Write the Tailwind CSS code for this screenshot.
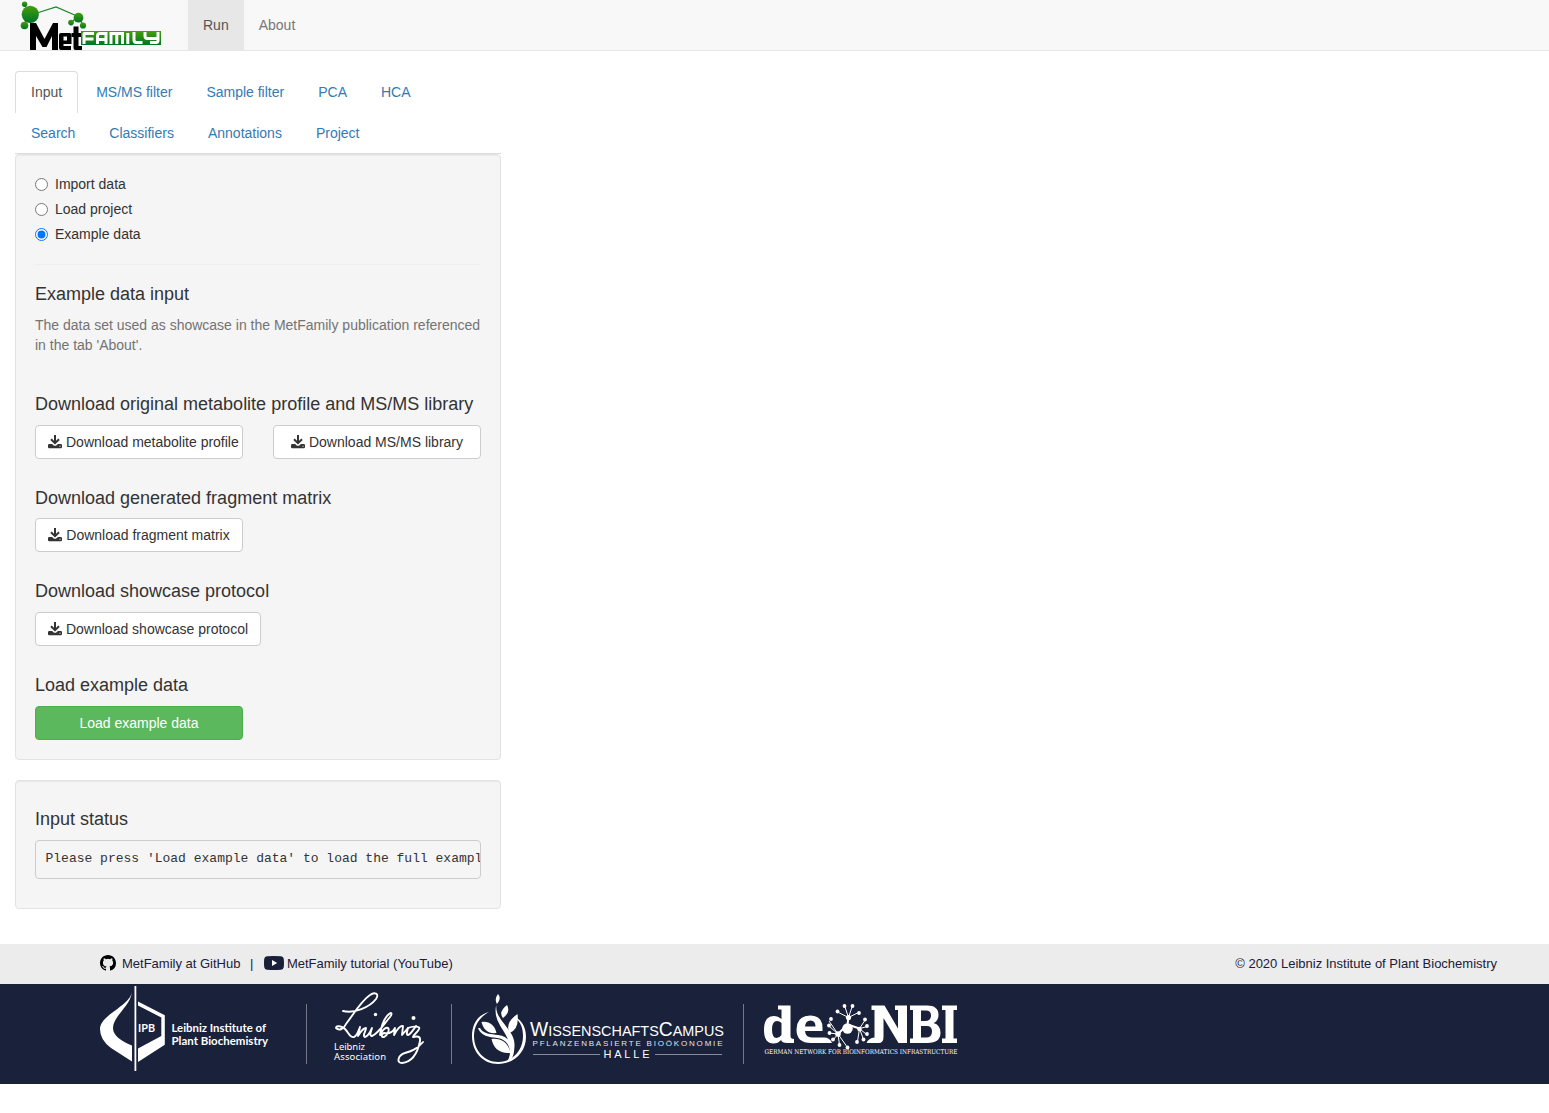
<!DOCTYPE html>
<html lang="en">
<head>
<meta charset="utf-8">
<title>MetFamily</title>
<script src="https://cdn.jsdelivr.net/npm/@tailwindcss/browser@4"></script>
</head>
<body class="bg-white text-[14px] leading-5 text-[#333] font-['Liberation_Sans',Arial,sans-serif]">
<svg width="0" height="0" class="absolute">
  <defs>
    <symbol id="download" viewBox="0 0 14 14">
      <path d="M7 0v7.800M3 4.300 7 8.200l4-3.900" fill="none" stroke="currentColor" stroke-width="2"/>
      <path fill-rule="evenodd" d="M1.200 9h2.900L6 10.700h2L9.900 9h2.900A1.200 1.200 0 0 1 14 10.200v1.900a1.200 1.200 0 0 1-1.200 1.200H1.200A1.200 1.200 0 0 1 0 12.100v-1.900A1.200 1.200 0 0 1 1.200 9ZM11.500 10.800v1h1v-1Z" fill="currentColor"/>
    </symbol>
  </defs>
</svg>

<nav class="flex h-[51px] border-b border-[#e7e7e7] bg-[#f8f8f8]">
  <a class="block w-[188px] pl-[15px]">
    <svg width="150" height="51" viewBox="15 0 150 51" role="img" aria-label="MetFamily">
      <defs><linearGradient id="g" x1="0" y1="0" x2="0" y2="1"><stop offset="0" stop-color="#43a009"/><stop offset="1" stop-color="#00732a"/></linearGradient></defs>
      <path d="m37 13 19-6 21 9M24 4l5 9-5 12M78 16l-7 7M78 16l5 9" fill="none" stroke="#16862a" stroke-width="1.2"/>
      <g fill="url(#g)"><circle cx="24.6" cy="4.3" r="2.700"/><circle cx="30.3" cy="14.3" r="8.600"/><circle cx="24.5" cy="25.5" r="3.800"/><circle cx="78.5" cy="17.700" r="4.900"/><circle cx="71" cy="22.600" r="2.800"/><circle cx="83" cy="25.500" r="3.100"/></g>
      <path d="M30 50V23h6l8.500 16 8.500-16h5v27h-6V36l-5.500 11h-4L36 36v14Z"/>
      <path fill-rule="evenodd" d="M61 33h8.500q2 0 2 2v9H63.500v2H71v4H61q-2 0-2-2V35q0-2 2-2Zm2.500 3.500v4H67v-4Z"/>
      <path d="M73.500 26.500h5V33h3v4h-3v9h3.500v4h-6.500q-2 0-2-2V37h-2v-4h2Z"/>
      <path fill="url(#g)" d="M81 31h80v14H81Z"/>
      <g fill="none" stroke="#fff" stroke-width="3"><path d="M84 44V34q0-.5.500-.5H94M84 39h9.500M97.500 44V36q0-2.500 2.500-2.500h6V44M98 39.500h8M111 44V33.500h11.500V44M116.800 33.500V44M127.800 33V44M134 32v8q0 2.500 2.500 2.500h6M145 32v4q0 2.500 2.500 2.500H158V32M158 38v2.500q0 2-2 2h-6"/></g>
    </svg>
  </a>
  <a class="bg-[#e7e7e7] h-[50px] px-[15px] py-[15px] text-[#555]">Run</a>
  <a class="px-[15px] py-[15px] text-[#777]">About</a>
</nav>

<main class="ml-[15px] mt-5 w-[486px]">
  <div class="border-b border-[#ddd] text-[#337ab7]">
    <div class="flex gap-[2px] h-[41px]">
      <a class="h-[42px] rounded-t border border-b-0 border-[#ddd] bg-white px-[15px] py-[10px] text-[#555]">Input</a>
      <a class="px-4 py-[11px]">MS/MS filter</a>
      <a class="px-4 py-[11px]">Sample filter</a>
      <a class="px-4 py-[11px]">PCA</a>
      <a class="px-4 py-[11px]">HCA</a>
    </div>
    <div class="flex gap-[2px] h-[41px]">
      <a class="px-4 py-[11px]">Search</a>
      <a class="px-4 py-[11px]">Classifiers</a>
      <a class="px-4 py-[11px]">Annotations</a>
      <a class="px-4 py-[11px]">Project</a>
    </div>
  </div>

  <section class="h-[606px] rounded border border-[#e3e3e3] bg-[#f5f5f5] p-[19px] shadow-[inset_0_1px_1px_rgba(0,0,0,0.05)]">
    <div class="flex flex-col gap-[5px]">
      <label class="flex items-center gap-[7px]"><input type="radio" name="source" class="mt-px size-[13px]">Import data</label>
      <label class="flex items-center gap-[7px]"><input type="radio" name="source" class="mt-px size-[13px]">Load project</label>
      <label class="flex items-center gap-[7px]"><input type="radio" name="source" checked class="mt-px size-[13px]">Example data</label>
    </div>
    <hr class="my-5 border-[#eee]">
    <h4 class="mb-[10px] text-[18px] leading-[19.8px]">Example data input</h4>
    <p class="text-[#737373] whitespace-nowrap">The data set used as showcase in the MetFamily publication referenced<br>in the tab 'About'.</p>

    <h4 class="mt-10 mb-[10px] text-[18px] leading-[19.8px] whitespace-nowrap">Download original metabolite profile and MS/MS library</h4>
    <div class="flex gap-[30px]">
      <a class="flex h-[34px] w-[208px] items-center gap-1 rounded border border-[#ccc] bg-white pl-3 whitespace-nowrap"><svg class="size-[14px] shrink-0"><use href="#download"/></svg>Download metabolite profile</a>
      <a class="flex h-[34px] w-[208px] items-center justify-center gap-1 rounded border border-[#ccc] bg-white"><svg class="size-[14px]"><use href="#download"/></svg>Download MS/MS library</a>
    </div>
    <h4 class="mt-[30px] mb-[10px] text-[18px] leading-[19.8px]">Download generated fragment matrix</h4>
    <a class="flex h-[34px] w-[208px] items-center justify-center gap-1 rounded border border-[#ccc] bg-white"><svg class="size-[14px]"><use href="#download"/></svg>Download fragment matrix</a>
    <h4 class="mt-[30px] mb-[10px] text-[18px] leading-[19.8px]">Download showcase protocol</h4>
    <a class="flex h-[34px] w-[226px] items-center justify-center gap-1 rounded border border-[#ccc] bg-white"><svg class="size-[14px]"><use href="#download"/></svg>Download showcase protocol</a>
    <h4 class="mt-[30px] mb-[10px] text-[18px] leading-[19.8px]">Load example data</h4>
    <button class="block h-[34px] w-[208px] rounded border border-[#4cae4c] bg-[#5cb85c] text-white">Load example data</button>
  </section>

  <section class="mt-5 h-[129px] rounded border border-[#e3e3e3] bg-[#f5f5f5] px-[19px] pt-[29px] shadow-[inset_0_1px_1px_rgba(0,0,0,0.05)]">
    <h4 class="mb-[10px] text-[18px] leading-[19.8px]">Input status</h4>
    <pre class="h-[39px] overflow-hidden rounded border border-[#ccc] bg-[#f5f5f5] px-[9.5px] py-[9.5px] text-[13px] leading-[18.57px] font-['Liberation_Mono',monospace]">Please press 'Load example data' to load the full example data set</pre>
  </section>
</main>

<footer class="mt-[35px] text-[13px] text-[#1a2039]">
  <div class="flex h-10 items-center bg-[#ececec] pl-[100px] pr-[52px]">
    <svg width="16" height="16" viewBox="0 0 16 16" class="mr-[6px] mb-[2px]"><path fill="#000" d="M8 0C3.58 0 0 3.58 0 8c0 3.540 2.290 6.530 5.470 7.590.4.070.550-.170.550-.380 0-.190-.010-.820-.010-1.490-2.010.370-2.530-.490-2.690-.940-.090-.230-.480-.940-.820-1.130-.280-.150-.680-.520-.010-.530.630-.010 1.080.580 1.230.820.720 1.210 1.870.870 2.330.660.070-.520.280-.870.510-1.070-1.780-.2-3.640-.890-3.640-3.950 0-.870.310-1.590.820-2.150-.080-.2-.360-1.020.080-2.120 0 0 .670-.210 2.200.820a7.600 7.600 0 0 1 4 0c1.530-1.040 2.200-.820 2.200-.820.440 1.100.160 1.920.080 2.120.510.560.820 1.270.820 2.150 0 3.070-1.870 3.750-3.650 3.950.290.250.540.730.540 1.480 0 1.070-.010 1.930-.010 2.200 0 .210.150.460.550.380A8 8 0 0 0 16 8c0-4.420-3.580-8-8-8Z"/></svg>
    <a>MetFamily at GitHub</a><span class="ml-[9.5px] mr-[10.5px]">|</span>
    <svg width="20" height="14" viewBox="0 0 20 14" class="mr-[3px] mb-[3px]"><path fill="#1a2039" d="M3 .3Q10-.3 17 .3q2.500.2 2.800 2.700.4 4 0 8-.3 2.500-2.800 2.700-7 .6-14 0Q.5 13.500.2 11q-.4-4 0-8Q.5.500 3 .3Z"/><path fill="#fff" d="m8 4 5.200 3L8 10Z"/></svg>
    <a>MetFamily tutorial (YouTube)</a>
    <span class="ml-auto">© 2020 Leibniz Institute of Plant Biochemistry</span>
  </div>
  <div class="flex h-[100px] bg-[#1a213a] pl-[100px]">
    <svg width="206" height="100" viewBox="100 984 206 100" fill="#fff">
      <path d="M131.800 992c-1 14-18.800 24-18.800 36 0 8 9 13.500 19 17.500v16l-21-13.500q-11-8-11-19c0-14 30-23 31.800-37Z"/>
      <path d="M134.500 986h1.800v85h-1.800Z"/>
      <path fill-rule="evenodd" d="M138 1001.500l26.800 13.800v29.500l-26.800 17.200v-13.500l23.300-12.500v-18.500L138 1005.500Z"/>
      <g class="font-['Lato',sans-serif] font-bold"><text x="138" y="1032" font-size="11" textLength="17" lengthAdjust="spacingAndGlyphs">IPB</text><text x="171.500" y="1032" font-size="10.500" textLength="94.500" lengthAdjust="spacingAndGlyphs">Leibniz Institute of</text><text x="171.500" y="1045" font-size="10.500" textLength="96.500" lengthAdjust="spacingAndGlyphs">Plant Biochemistry</text></g>
    </svg>
    <div class="mt-5 h-[60px] w-px bg-[#747887]"></div>
    <svg width="144" height="100" viewBox="307 984 144 100" fill="#fff">
      <g fill="none" stroke="#fff" stroke-width="1.900" stroke-linecap="round" stroke-linejoin="round">
        <path d="M343 1011c11 3 27-4 33-12 4-6-2-7-6-4-9 6-17 20-24 29-2 5-7 7-10 4 0-3 6-2 9 1 4 4 5 9 9 8 3-1 4-5 6-10l-2 9c3-5 6-8 8-8 0 3-4 8-1 9 4-1 5-5 7-9-1 3-3 8 0 8 6-2 12-12 18-19 3-4 1-5-1-3-6 5-8 14-9 21 2-4 5-8 8-7 2 2-1 8-4 9-3 0-3-3 0-4 5 1 9-1 11-5l-1 7c3-6 7-10 9-9l-1 9 6-7c-1 4-2 7 0 7 3-1 5-5 8-9"/>
        <path d="M408 1028c4-2 13-2 11 1-1 3-5 5-6 8 4-1 8-1 7 4-2 10-7 21-18 22-6 0-4-8 3-10 7-2 12-4 18-11"/>
      </g>
      <circle cx="375.500" cy="1014.500" r="1.700"/><circle cx="413.500" cy="1018" r="2"/>
      <g class="font-['Noto_Sans',sans-serif]" font-size="9.500"><text x="334" y="1050" textLength="31">Leibniz</text><text x="334" y="1060" textLength="52">Association</text></g>
    </svg>
    <div class="mt-5 h-[60px] w-px bg-[#747887]"></div>
    <svg width="291" height="100" viewBox="452 984 291 100" fill="#fff">
      <path fill-rule="evenodd" d="M489 1012c-12 3-17 13-17 24 0 16 11 28 26 28s28-11 28-27c0-11-5-17-11-20 6 6 8 11 8 19 0 14-10 26-25 26-13 0-24-11-24-26 0-11 6-19 15-24Z"/>
      <path d="M496.500 1004c-3 16 19 25 18 42-.4 9-2 14-7 15 3-5 3-11 2-16-2-14-18-23-13-41Z"/>
      <path d="M480 1028c3 6 11 6 18 7 8 1 13 5 14 13l-2 6c0-9-4-15-13-16-8-1-16-2-19-10Z"/>
      <path d="M498 994q4 4-1 10-3-5 1-10ZM507 1005q4 7-4 13-5-6 4-13ZM517.500 1014q2 15-8 19-5-10 8-19ZM481.500 1022c8-1 13 3 15 11-8 1-13-3-15-11ZM491.500 1039c10-1 17 4 19 14-11 1-17-5-19-14Z"/>
      <g class="font-['Liberation_Sans',Arial,sans-serif]">
        <text x="530" y="1035.500" font-size="15" textLength="194" lengthAdjust="spacingAndGlyphs"><tspan font-size="20">W</tspan>ISSENSCHAFTS<tspan font-size="20">C</tspan>AMPUS</text>
        <text x="532.500" y="1046" font-size="8" textLength="190" fill="#e2e3e7">PFLANZENBASIERTE BIOÖKONOMIE</text>
        <text x="603.500" y="1058" font-size="11" textLength="46">HALLE</text>
      </g>
      <path d="M533 1054h67v1h-67ZM655 1054h67v1h-67Z" fill="#888c98"/>
    </svg>
    <div class="mt-5 h-[60px] w-px bg-[#747887]"></div>
    <svg width="220" height="100" viewBox="744 984 220 100" fill="#fff">
      <path fill-rule="evenodd" d="M780.500 1005.500h10V1036q0 3 3.500 3v4h-7q-5 0-6-3-3 3.500-7.500 3.500-9.500 0-9.500-13.500 0-14 10-14 4 0 7.500 3v-9.500h-3.500v-4ZM781.500 1023q-2-2-4.500-2-5 0-5 8.500t4.500 8.500q3 0 5-3Z"/>
      <path fill-rule="evenodd" d="M810 1015.500q12.500 0 12.500 12.500v3H805q.500 6.500 7 6.500h12q6 0 8 5.500h-21q-14.500 0-14.500-13.500t13.500-14Zm-5 11h10.500q0-6-5-6t-5.500 6Z"/>
      <path d="M874 1005.500h10.500l13.500 23v-18.500h-3v-4.500h12v37.500h-8.500l-15-25V1037q0 6-5 6h-12q2-5 8-5.500V1010h-3v-4.500Z"/>
      <path fill-rule="evenodd" d="M910 1005.500h17q11.500 0 11.500 9.500 0 6-5 8 7 2 7 9.500 0 10.500-13 10.500h-17.500v-4.500h3V1010h-3ZM921 1010.500v10.500h4q6 0 6-5.500t-6-5ZM921 1026v11.500h5q6 0 6-6t-6-5.500Z"/>
      <path d="M942 1005.500h15v4.500h-3.500v28.500h3.500v4.500h-15v-4.500h3.500V1010H942Z"/>
      <g stroke="#fff" stroke-width="1" fill="none"><path stroke-width="2" d="m838 1034 9.500-9.500 1-7M847.500 1024.500l12 4"/><path d="M848.500 1017.500l-11-5.500M848.500 1017.500l-4-12M848.500 1017.500l4-12M848.500 1017.500l10-5M838 1034l-9-13M838 1034l-9-8M838 1034l-9-1M838 1034l-5 6M838 1034l1.500 11M838 1034l9.500 13.500M859.500 1028.500l6-9M859.500 1028.500l8-2M859.500 1028.500l7 6M859.500 1028.500l4 11M859.500 1028.500l-2 13"/></g>
      <circle cx="847.500" cy="1028.500" r="5.200"/><circle cx="838" cy="1034" r="2.800"/><circle cx="848.500" cy="1017.500" r="2.600"/><circle cx="859.500" cy="1029" r="2.300"/>
      <circle cx="837.500" cy="1011.500" r="1.900"/><circle cx="844.500" cy="1006" r="1.900"/><circle cx="852.500" cy="1006" r="1.900"/><circle cx="859" cy="1013" r="1.900"/><circle cx="831" cy="1019" r="1.900"/><circle cx="829" cy="1025.500" r="1.900"/><circle cx="829.500" cy="1033" r="1.900"/><circle cx="833" cy="1039.500" r="1.900"/><circle cx="839.500" cy="1045" r="1.900"/><circle cx="847.500" cy="1047.500" r="1.900"/><circle cx="865" cy="1019.500" r="1.900"/><circle cx="867" cy="1026" r="1.900"/><circle cx="867" cy="1034" r="1.900"/><circle cx="863.500" cy="1039.500" r="1.900"/><circle cx="857" cy="1042" r="1.900"/>
      <text x="764.500" y="1054" font-size="6.500" textLength="193" lengthAdjust="spacingAndGlyphs" class="font-['DejaVu_Serif',serif]">GERMAN NETWORK FOR BIOINFORMATICS INFRASTRUCTURE</text>
    </svg>
  </div>
</footer>
</body>
</html>
